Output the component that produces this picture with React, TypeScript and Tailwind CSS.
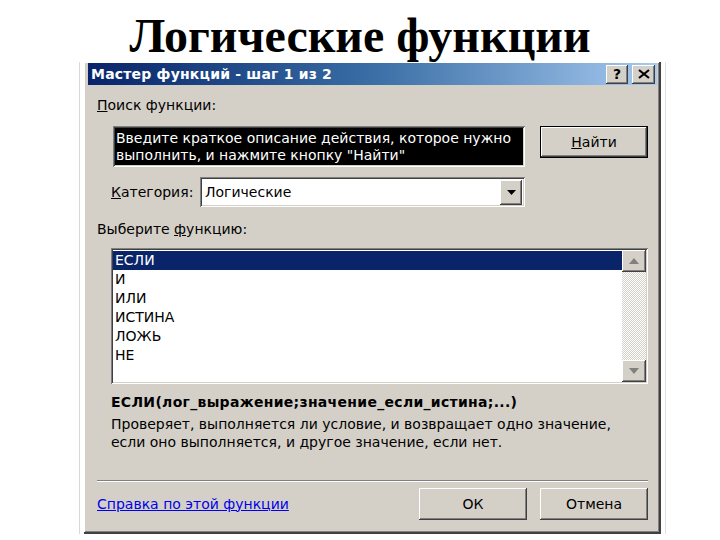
import React from "react";

const raised =
  "bg-[#d4d0c8] shadow-[inset_-1px_-1px_#404040,inset_1px_1px_#ffffff,inset_-2px_-2px_#808080,inset_2px_2px_#d4d0c8]";
const sunken =
  "shadow-[inset_1px_1px_#808080,inset_-1px_-1px_#ffffff,inset_2px_2px_#404040,inset_-2px_-2px_#d4d0c8]";

function Btn({ children, cls = "" }: { children: React.ReactNode; cls?: string }) {
  return (
    <div className={`flex items-center justify-center ${raised} ${cls}`}>{children}</div>
  );
}

export default function App() {
  const items = ["ЕСЛИ", "И", "ИЛИ", "ИСТИНА", "ЛОЖЬ", "НЕ"];
  return (
    <div className="w-[720px] h-[540px] bg-white overflow-hidden flex flex-col font-['DejaVu_Sans',sans-serif] text-[14px] text-black">
      <h1 className="h-[62px] flex items-center justify-center font-['Liberation_Serif',serif] font-bold text-[48px] leading-none text-black pt-[10px]">
        Логические функции
      </h1>
      <div className="flex">
        <div className="w-[84px] flex justify-end pr-[4px]">
          <div className="w-px h-[472px] bg-[#d8d8d8]" />
        </div>
        <div className="w-[577px] h-[472px] bg-[#d4d0c8] flex flex-col shadow-[inset_-2px_-2px_#404040,inset_1px_1px_#ffffff,inset_-3px_-3px_#808080]">
          {/* title bar */}
          <div className="mt-[1px] ml-[4px] mr-[4px] h-[22px] bg-gradient-to-r from-[#0a246a] via-[#3a6ea5] to-[#a6caf0] flex items-center pl-[3px] pr-[2px]">
            <span className="text-white font-bold text-[14px] tracking-[0.2px] flex-1">Мастер функций - шаг 1 из 2</span>
            <Btn cls="w-[22px] h-[19px] font-bold text-[14px] mr-[4px]">?</Btn>
            <Btn cls="w-[23px] h-[19px]">
              <svg width="12" height="10" viewBox="0 0 12 10">
                <path d="M1 1 L11 9 M11 1 L1 9" stroke="#000" strokeWidth="2.2" />
              </svg>
            </Btn>
          </div>

          {/* Поиск функции */}
          <div className="mt-[11px] ml-[13px] h-[18px] leading-[18px]">
            <span className="underline">П</span>оиск функции:
          </div>

          <div className="mt-[12px] flex h-[41px]">
            <div className={`ml-[29px] w-[412px] h-[41px] bg-white p-[2px] ${sunken}`}>
              <div className="w-full h-full bg-black text-white leading-[17px] pl-[1px] pt-[2px] whitespace-nowrap overflow-hidden">
                <div>Введите краткое описание действия, которое нужно</div>
                <div>выполнить, и нажмите кнопку "Найти"</div>
              </div>
            </div>
            <div className="ml-[15px] w-[108px] h-[32px] border border-black">
              <Btn cls="w-full h-full">
                <span>
                  <span className="underline">Н</span>айти
                </span>
              </Btn>
            </div>
          </div>

          {/* Категория */}
          <div className="mt-[10px] flex items-center h-[30px]">
            <div className="ml-[27px] w-[89px]">
              <span className="underline">К</span>атегория:
            </div>
            <div className={`w-[325px] h-[30px] bg-white flex items-center p-[2px] ${sunken}`}>
              <div className="flex-1 pl-[3px]">Логические</div>
              <Btn cls="w-[22px] h-[25px] mr-[1px]">
                <svg width="9" height="5" viewBox="0 0 9 5">
                  <path d="M0 0 H9 L4.5 5 Z" fill="#000" />
                </svg>
              </Btn>
            </div>
          </div>

          {/* Выберите функцию */}
          <div className="mt-[13px] ml-[13px] h-[18px] leading-[18px]">
            Выберите <span className="underline">ф</span>ункцию:
          </div>

          {/* list */}
          <div className={`mt-[10px] ml-[27px] w-[537px] h-[136px] bg-white flex p-[2px] ${sunken}`}>
            <div className="flex-1 pt-[1px]">
              {items.map((it, i) => (
                <div
                  key={it}
                  className={`h-[19px] leading-[19px] pl-[2px] ${i === 0 ? "bg-[#0a246a] text-white" : "text-black"}`}
                >
                  {it}
                </div>
              ))}
            </div>
            <div className="w-[24px] flex flex-col bg-[repeating-conic-gradient(#d4d0c8_0_25%,#ffffff_0_50%)] bg-[length:2px_2px]">
              <Btn cls="h-[22px] w-full">
                <svg width="10" height="6" viewBox="0 0 10 6">
                  <path d="M0 6 H10 L5 0 Z" fill="#808080" />
                </svg>
              </Btn>
              <div className="flex-1" />
              <Btn cls="h-[22px] w-full">
                <svg width="10" height="6" viewBox="0 0 10 6">
                  <path d="M0 0 H10 L5 6 Z" fill="#808080" />
                </svg>
              </Btn>
            </div>
          </div>

          {/* syntax */}
          <div className="mt-[9px] ml-[27px] h-[18px] leading-[18px] font-bold tracking-[0.3px]">
            ЕСЛИ(лог_выражение;значение_если_истина;...)
          </div>
          <div className="mt-[4px] ml-[27px] leading-[18px]">
            <div>Проверяет, выполняется ли условие, и возвращает одно значение,</div>
            <div>если оно выполняется, и другое значение, если нет.</div>
          </div>

          {/* separator */}
          <div className="mt-[29px] ml-[13px] w-[551px]">
            <div className="h-px bg-[#808080]" />
            <div className="h-px bg-white" />
          </div>

          {/* bottom row */}
          <div className="mt-[6px] flex items-center h-[32px]">
            <div className="ml-[13px] w-[322px] text-[#0000ee] underline">Справка по этой функции</div>
            <Btn cls="w-[108px] h-[32px]">ОК</Btn>
            <Btn cls="ml-[13px] w-[108px] h-[32px]">Отмена</Btn>
          </div>
        </div>
        <div className="flex-1 flex flex-col pl-[4px]">
          <div className="h-[472px] w-px bg-[#e0e0e0]" />
        </div>
      </div>
    </div>
  );
}
